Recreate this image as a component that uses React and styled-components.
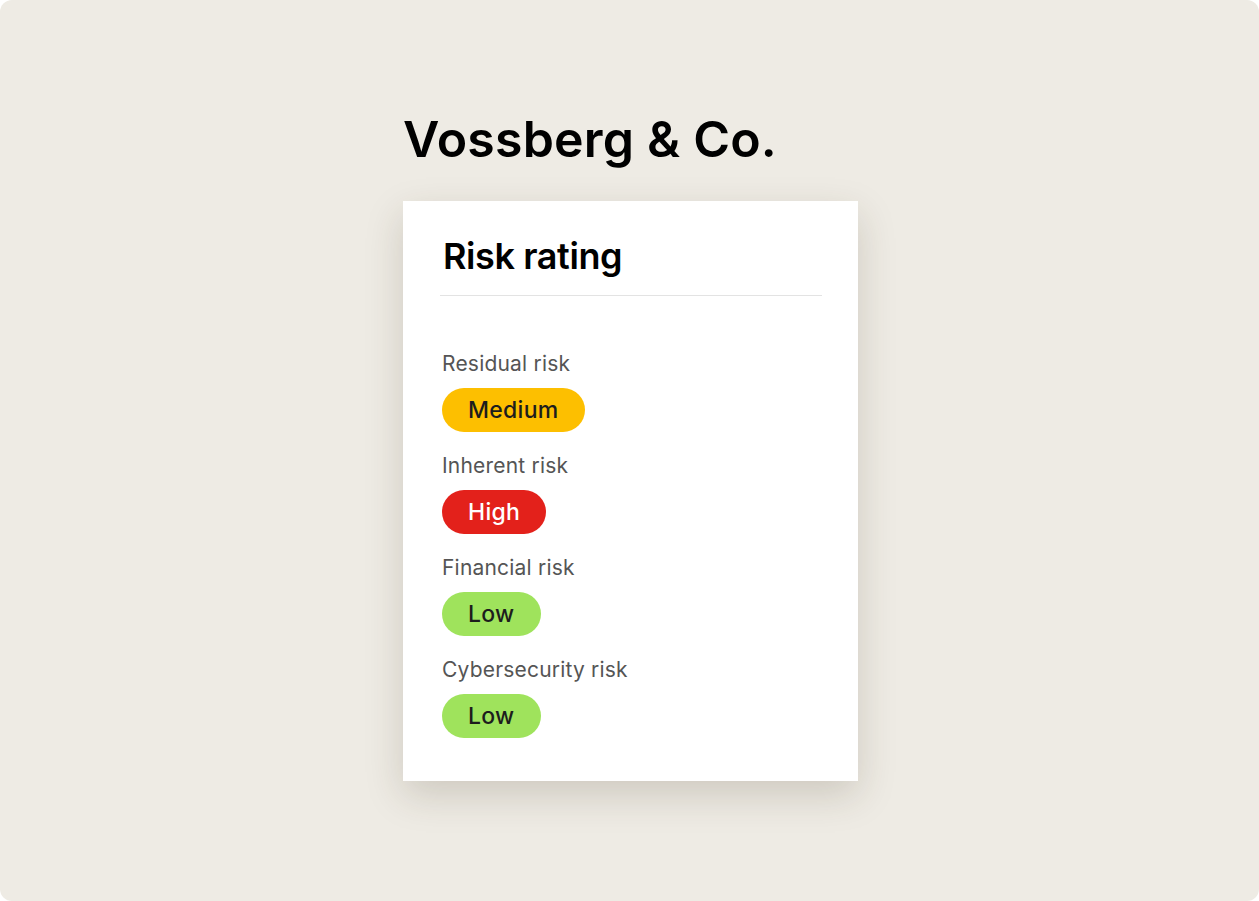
import React from "react";
import styled, { createGlobalStyle } from "styled-components";

const GlobalStyle = createGlobalStyle`
  html, body {
    margin: 0;
    padding: 0;
    background: #ffffff;
  }
  body {
    font-family: Inter, "Noto Sans", sans-serif;
  }
`;

const Frame = styled.div`
  box-sizing: border-box;
  width: 1259px;
  height: 901px;
  background: #eeebe4;
  border-radius: 12px;
  display: flex;
  flex-direction: column;
  align-items: center;
  padding-top: 107px;
`;

const Column = styled.div`
  display: flex;
  flex-direction: column;
  width: 455px;
  margin-left: 2px;
`;

const Brand = styled.h1`
  margin: 0 0 30px 0;
  font-size: 50px;
  font-weight: 600;
  line-height: 64px;
  letter-spacing: 0.2px;
  color: #000;
`;

const Card = styled.section`
  background: #fff;
  box-shadow: 0 14px 36px rgba(60, 50, 30, 0.18);
  padding: 32px 36px 42px 37px;
  height: 580px;
  box-sizing: border-box;
`;

const CardTitle = styled.h2`
  margin: 0 0 0 3px;
  font-size: 36px;
  font-weight: 600;
  line-height: 46px;
  letter-spacing: -0.4px;
  color: #000;
`;

const Divider = styled.hr`
  border: none;
  border-top: 1px solid #e3e3e3;
  margin: 16px 0 56px 0;
`;

const List = styled.div`
  display: flex;
  flex-direction: column;
  gap: 22px;
  padding-left: 2px;
`;

const Row = styled.div`
  display: flex;
  flex-direction: column;
  align-items: flex-start;
  gap: 12px;
`;

const Label = styled.div`
  font-size: 21px;
  line-height: 24px;
  letter-spacing: 0.2px;
  color: #555555;
`;

const tones = {
  medium: { bg: "#fdbf00", fg: "#1d1d1d" },
  high: { bg: "#e3211b", fg: "#ffffff" },
  low: { bg: "#9fe35c", fg: "#1d1d1d" },
};

const Pill = styled.span`
  display: inline-flex;
  align-items: center;
  height: 44px;
  padding: 0 26px;
  border-radius: 22px;
  font-size: 23px;
  font-weight: 500;
  letter-spacing: 0.3px;
  background: ${(p) => tones[p.$tone].bg};
  color: ${(p) => tones[p.$tone].fg};
`;

const risks = [
  { label: "Residual risk", value: "Medium", tone: "medium" },
  { label: "Inherent risk", value: "High", tone: "high" },
  { label: "Financial risk", value: "Low", tone: "low" },
  { label: "Cybersecurity risk", value: "Low", tone: "low" },
];

export default function App() {
  return (
    <>
      <GlobalStyle />
      <Frame>
        <Column>
          <Brand>Vossberg &amp; Co.</Brand>
          <Card>
            <CardTitle>Risk rating</CardTitle>
            <Divider />
            <List>
              {risks.map((r) => (
                <Row key={r.label}>
                  <Label>{r.label}</Label>
                  <Pill $tone={r.tone}>{r.value}</Pill>
                </Row>
              ))}
            </List>
          </Card>
        </Column>
      </Frame>
    </>
  );
}
